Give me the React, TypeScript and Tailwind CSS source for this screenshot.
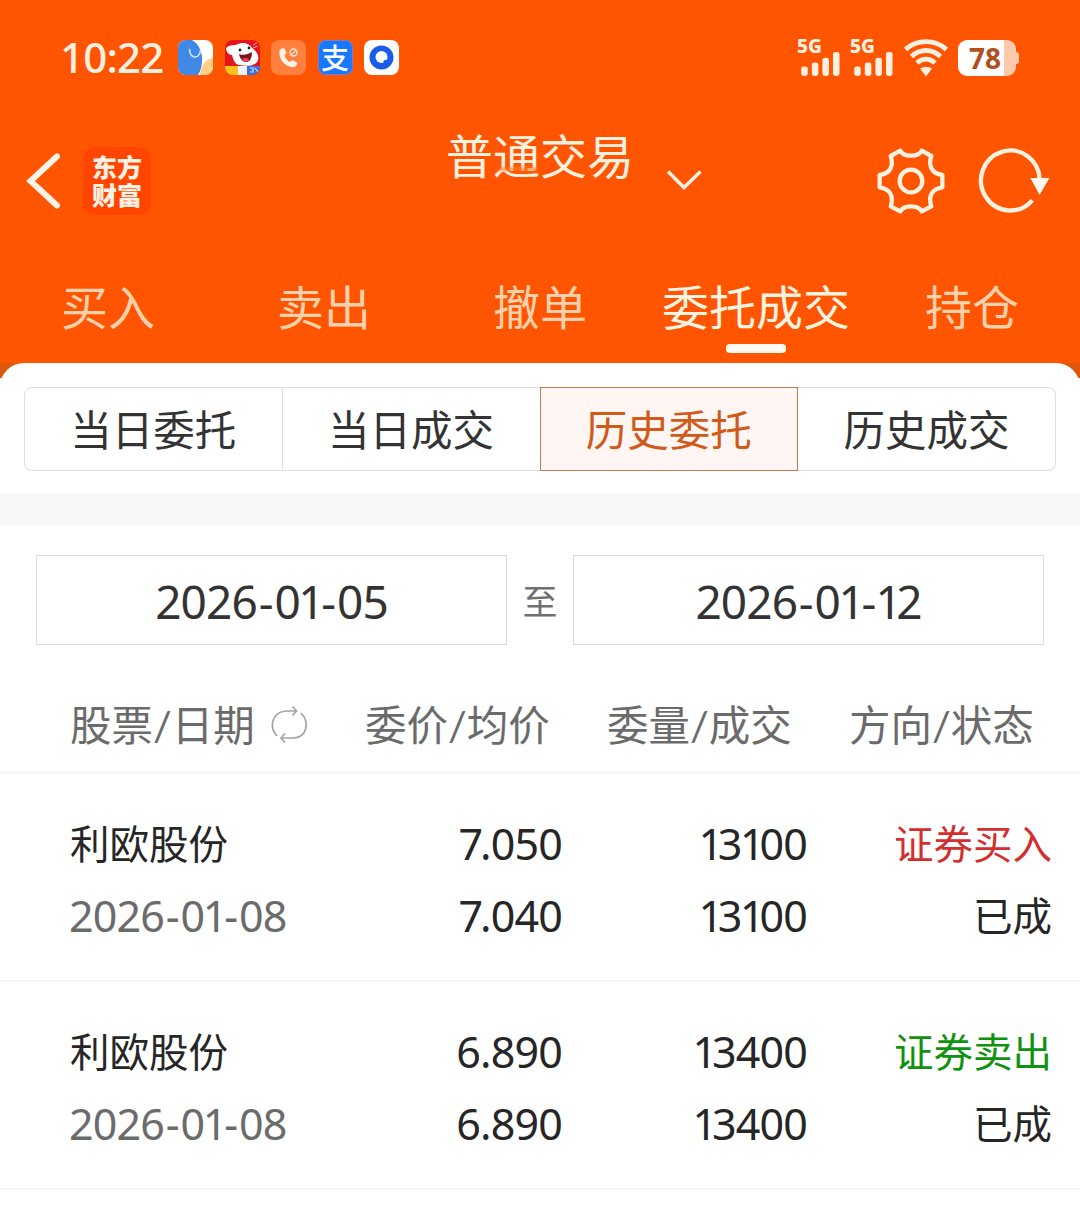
const tabs = ["买入", "卖出", "撤单", "委托成交", "持仓"];
const segments = ["当日委托", "当日成交", "历史委托", "历史成交"];

const orders = [
  {
    name: "利欧股份",
    date: "2026-01-08",
    price: "7.050",
    avgPrice: "7.040",
    amount: "13100",
    dealt: "13100",
    side: "buy",
    sideLabel: "证券买入",
    status: "已成",
  },
  {
    name: "利欧股份",
    date: "2026-01-08",
    price: "6.890",
    avgPrice: "6.890",
    amount: "13400",
    dealt: "13400",
    side: "sell",
    sideLabel: "证券卖出",
    status: "已成",
  },
];

// Noto Sans digits are tabular: tighten around 1 and 7
function spacingFor(char: string, next?: string) {
  if (char === "-") return next === "1" ? "tracking-[-0.02em]" : "tracking-[0.02em]";
  if (next === "-") return char === "1" ? "tracking-[-0.07em]" : "tracking-[0.02em]";
  if (char === "1") return "tracking-[-0.12em]";
  if (next === "1") return "tracking-[-0.055em]";
  if (char === "7") return "tracking-[-0.07em]";
  return "tracking-[-0.02em]";
}

function Digits({ value }: { value: string }) {
  return (
    <>
      {value.split("").map((char, i) => (
        <span key={i} className={spacingFor(char, value[i + 1])}>
          {char}
        </span>
      ))}
    </>
  );
}

function Signal() {
  return (
    <div className="flex h-9 w-[43px] flex-col">
      <span className="-ml-px h-3 font-['Noto_Sans'] text-[19px] font-extrabold leading-[13px]">5G</span>
      <svg viewBox="0 0 43 26" className="-mt-[1px] h-[26px] w-[43px]" fill="#ffefe0">
        <rect x="2.500" y="16" width="6.800" height="10" rx="2.500" />
        <rect x="13.500" y="12" width="6.800" height="14" rx="2.500" />
        <rect x="24.500" y="7" width="6.800" height="19" rx="2.500" />
        <rect x="35.500" y="1" width="6.800" height="25" rx="2.500" />
      </svg>
    </div>
  );
}

function Wifi() {
  return (
    <svg viewBox="0 0 44 38" className="h-[38px] w-11" fill="none" stroke="#ffefe0" strokeWidth="4.800">
      <path d="M1.5 10.5C13 0 31 0 42.5 10.5" />
      <path d="M7.5 17.5C16 9.5 28 9.5 36.5 17.5" />
      <path d="M13 24C18.500 19 25.500 19 31 24" />
      <path d="M16 29.500Q22 26 28 29.500L22 37.500Z" fill="#ffefe0" stroke="none" />
    </svg>
  );
}

function AppIcons() {
  return (
    <div className="ml-[17px] flex gap-[11.500px]">
      <svg viewBox="0 0 35 35" className="size-[35px] rounded-lg">
        <rect width="35" height="35" fill="#fffdf8" />
        <path d="M22 35C23 26 27 19 35 18V35Z" fill="#ffcf86" />
        <path d="M0 0H14C21 4 25 13 24 22C23.500 28 22 32 20 35H0Z" fill="#4189e6" />
        <path d="M11.500 9C11 19 22 20 22.500 10" fill="none" stroke="#cfe6ff" strokeWidth="1.600" />
      </svg>
      <svg viewBox="0 0 35 35" className="size-[35px] rounded-lg">
        <rect width="35" height="35" fill="#e5131c" />
        <path d="M1 8C5 4 10 6 13 4C18 2 24 3 27 8C33 12 35 18 32 22C28 27 20 26 14 25C9 24 8 18 7 15C4 15 1 12 1 8Z" fill="#fff" />
        <path d="M14 14C19 16 23 14 27 12C27 18 25 22 21 22C17 22 15 18 14 14Z" fill="#7c1420" />
        <path d="M17 19C20 17 23 18 24 20Q21 24 17 19Z" fill="#f0484d" />
        <circle cx="15" cy="10" r="1.400" fill="#222" />
        <circle cx="24" cy="8" r="1.400" fill="#222" />
        <path d="M28 5L32 3M28 8L33 6" stroke="#ffb0a0" strokeWidth="1" />
        <rect y="26" width="13" height="9" fill="#ffc21f" />
        <rect x="13" y="26" width="9" height="9" fill="#eef3ff" />
        <rect x="22" y="26" width="13" height="9" fill="#3474dc" />
        <path d="M25 28h3v4h-3M30 28l3 4" fill="none" stroke="#cfe0ff" strokeWidth="1.200" />
      </svg>
      <svg viewBox="0 0 35 35" className="size-[35px] rounded-lg" fill="none">
        <rect width="35" height="35" fill="#ff7f3f" />
        <path
          d="M8.500 11C7.500 18 13 27 21.500 27C24.500 27 26.500 25 26 22.500L21.500 20L19 22C16 20.500 14 18 13.500 15L15.500 13L13.500 8.500C11 8 9 9 8.500 11Z"
          fill="#fff3e8"
        />
        <circle cx="22.500" cy="12.500" r="3.500" stroke="#ffe0cc" strokeWidth="1.500" />
        <path d="M20 15L25 10" stroke="#ffe0cc" strokeWidth="1.300" />
      </svg>
      <div className="flex size-[35px] items-center justify-center rounded-lg bg-[#1677ff] pb-0.5 font-['Noto_Sans_CJK_SC'] text-[28px] font-medium leading-none text-white ring-1 ring-[#7d7fc0] ring-inset">
        支
      </div>
      <svg viewBox="0 0 35 35" className="size-[35px] rounded-lg">
        <rect width="35" height="35" fill="#fff" />
        <circle cx="17.500" cy="17.500" r="12" fill="#1b5be8" />
        <circle cx="17.500" cy="17" r="6" fill="#fff" />
        <path d="M19.500 24.500V21.500Q19.500 20 21 20H24.500V24.500Z" fill="#1b5be8" />
      </svg>
    </div>
  );
}

function StatusBar() {
  return (
    <div className="flex h-[115px] items-center justify-between pr-[61px] pl-[61px] text-[#ffefe0]">
      <div className="flex items-center">
        <span className="-ml-px w-[101px] pb-0.5 font-['Noto_Sans'] text-[42px] font-medium leading-none tracking-[-0.8px] whitespace-nowrap">
          10:22
        </span>
        <AppIcons />
      </div>
      <div className="flex items-center">
        <Signal />
        <div className="ml-2.5">
          <Signal />
        </div>
        <div className="ml-2.5">
          <Wifi />
        </div>
        <div className="ml-2.5 flex items-center">
          <div className="flex h-9 w-[58px] items-center justify-center rounded-[9px] bg-linear-to-r from-white from-80% to-[#ffc9ac] to-80% pr-1 font-['Noto_Sans'] text-[28px] font-bold leading-none text-[#b04f1d]">
            78
          </div>
          <div className="h-3 w-[3px] rounded-r bg-[#ffc9ac]" />
        </div>
      </div>
    </div>
  );
}

function NavBar() {
  return (
    <div className="flex h-[132px] justify-between">
      <div className="flex w-[300px] items-center pl-[26px]">
        <svg viewBox="0 0 34 56" className="h-14 w-[34px]" fill="none" stroke="#fff3e8" strokeWidth="6">
          <path d="M31 3.500L4.500 28L31 52.500" strokeLinecap="round" />
        </svg>
        <div className="ml-[23px] flex size-[68px] items-center justify-center rounded-xl bg-[#ff4500] pb-[3px] font-['Noto_Sans_CJK_SC'] text-[25px] font-black leading-[28px] text-[#fff1e4]">
          <span className="w-[50px] break-all">东方财富</span>
        </div>
      </div>
      <div className="relative pt-[11px]">
        <h1 className="text-[47px] leading-[60px] text-[#fff1e0]">普通交易</h1>
        <div className="absolute top-[52px] left-[52px] h-1 w-10 rounded-full bg-[#ff7a25]/60 blur-[1px]" />
        <svg viewBox="0 0 38 22" className="absolute top-[54px] left-[220px] h-[22px] w-[38px]" fill="none" stroke="#fff1e0" strokeWidth="3.500">
          <path d="M2 2.500L18 18.500L34.500 2.500" />
        </svg>
      </div>
      <div className="flex w-[300px] items-center justify-end gap-[31px] pr-[28px]">
        <svg viewBox="50 50 204 204" className="size-[68px]" fill="none" stroke="#fff1e0" strokeWidth="13" strokeLinejoin="round">
          <path d="M120 61C130 81 174 81 184 61L213 77C203 106 214 130 246 134V171C214 175 203 199 213 228L184 243C174 223 130 223 120 243L91 228C101 199 90 175 58 171V134C90 130 101 106 91 77Z" />
          <circle cx="152" cy="152" r="34" />
        </svg>
        <svg viewBox="350 50 228 204" className="h-[68px] w-[76px]" fill="none" stroke="#fff1e0" strokeWidth="13">
          <path d="M541 148A88 90 0 1 0 519 210" />
          <path d="M513 143H570L541 194Z" fill="#fff8f0" stroke="none" />
        </svg>
      </div>
    </div>
  );
}

function SwapIcon() {
  return (
    <svg viewBox="0 0 40 40" className="ml-[15px] size-10" fill="none" stroke="#a3a3a3" strokeWidth="1.700">
      <path d="M7 31C-2 21 3 7 16 6H26" />
      <path d="M22.500 1.500L26.500 6L22.500 10.500" />
      <path d="M31 8C40 17 37 32 24 33H12" />
      <path d="M15 28.500L11 33L15 37.500" />
    </svg>
  );
}

function DateBox({ value }: { value: string }) {
  return (
    <div className="flex h-[90px] w-[471px] items-center justify-center border border-[#dadada] pt-0.5 font-['Noto_Sans'] text-[46px] leading-none text-[#333]">
      <Digits value={value} />
    </div>
  );
}

export default function App() {
  return (
    <div className="flex h-[1212px] w-[1080px] flex-col overflow-hidden bg-white font-[Lato,'Noto_Sans_CJK_SC',sans-serif] text-[#262626]">
      <header className="bg-[#ff5500]">
        <StatusBar />
        <NavBar />
        <nav className="grid h-[116px] grid-cols-5">
          {tabs.map((tab) => (
            <div key={tab} className="flex flex-col items-center pt-[30px]">
              <span
                className={
                  tab === "委托成交"
                    ? "text-[47px] leading-[60px] text-[#fff3e2]"
                    : "text-[47px] leading-[60px] text-[#ffd0ac]"
                }
              >
                {tab}
              </span>
              {tab === "委托成交" && <div className="mt-[7px] h-[9px] w-[60px] rounded bg-[#fffaf2]" />}
            </div>
          ))}
        </nav>
      </header>

      <main className="bg-[linear-gradient(#dc570c_15px,#fff_15px)]">
        <div className="rounded-t-3xl bg-white px-6 pt-6 pb-[22px]">
          <div className="flex h-[84px]">
            {segments.map((label, i) => (
              <button
                key={label}
                className={
                  i === 2
                    ? "flex-1 border border-[#c07c52] bg-[#fff5f2] pt-0.5 text-[41.5px] text-[#cf5a1a]"
                    : i === 0
                      ? "flex-1 rounded-l-lg border border-[#dcdfdf] pt-0.5 text-[41.5px] text-[#333]"
                      : i === 1
                        ? "flex-1 border-y border-[#dcdfdf] pt-0.5 text-[41.5px] text-[#333]"
                        : "flex-1 rounded-r-lg border border-l-0 border-[#dcdfdf] pt-0.5 text-[41.5px] text-[#333]"
                }
              >
                {label}
              </button>
            ))}
          </div>
        </div>

        <div className="h-8 bg-[#f6f7f9]" />

        <div className="flex items-center px-9 pt-[30px]">
          <DateBox value="2026-01-05" />
          <span className="flex-1 pt-0.5 text-center text-[35px] text-[#707070]">至</span>
          <DateBox value="2026-01-12" />
        </div>

        <div className="flex h-[129px] items-center border-b-[3px] border-[#f6f7f8] pt-[34px] pl-[70px] text-[41.5px] text-[#6b6b6b]">
          <div className="flex w-[295px] items-center">
            股票/日期
            <SwapIcon />
          </div>
          <div className="w-[242px]">委价/均价</div>
          <div className="w-[242px]">委量/成交</div>
          <div>方向/状态</div>
        </div>

        {orders.map((order, i) => (
          <div
            key={i}
            className="grid h-[208px] grid-cols-[276px_216px_245px_245px] border-b-2 border-[#f5f5f5] pt-[34px] pl-[70px] leading-[72px]"
          >
            <div>
              <div className="text-[39.5px]">{order.name}</div>
              <div className="-ml-px font-['Noto_Sans'] text-[43px] text-[#6b6b6b]">
                <Digits value={order.date} />
              </div>
            </div>
            <div className="text-right font-['Noto_Sans'] text-[43px]">
              <div>
                <Digits value={order.price} />
              </div>
              <div>
                <Digits value={order.avgPrice} />
              </div>
            </div>
            <div className="text-right font-['Noto_Sans'] text-[43px]">
              <div>
                <Digits value={order.amount} />
              </div>
              <div>
                <Digits value={order.dealt} />
              </div>
            </div>
            <div className="text-right text-[39.5px]">
              <div className={order.side === "buy" ? "text-[#d32f2f]" : "text-[#0f930f]"}>{order.sideLabel}</div>
              <div>{order.status}</div>
            </div>
          </div>
        ))}
      </main>
    </div>
  );
}
